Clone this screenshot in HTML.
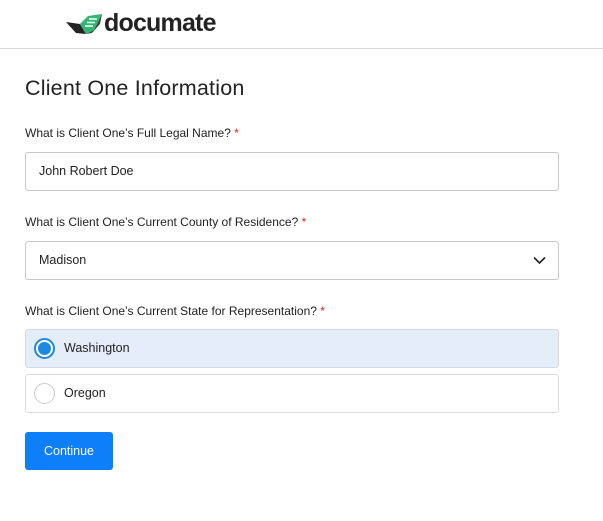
<!DOCTYPE html>
<html><head><style>
*{box-sizing:border-box;margin:0;padding:0}
body{width:603px;height:521px;background:#fff;font-family:"Liberation Sans",sans-serif;color:#1d1d1f;position:relative;overflow:hidden}
.hdr{position:absolute;left:0;top:0;width:603px;height:49px;border-bottom:1px solid #d4d4d4}
.logo{position:absolute;left:104px;top:9px;font-size:25px;font-weight:bold;color:#222;letter-spacing:-0.8px}
h1{position:absolute;left:25px;top:76px;font-size:21.5px;font-weight:normal;color:#222;letter-spacing:0.2px}
.lbl{position:absolute;left:25px;font-size:12px;color:#222}
.lbl b{color:#e02020;font-weight:normal}
.box{position:absolute;left:25px;width:534px;height:39px;border:1px solid #c9c9c9;border-radius:3px;font-size:12.5px;padding-left:13px;line-height:37px;color:#222}
.sel{background:#e5edf8;border-color:#d3d9e2}
.rad{padding-left:38px}
.circ{position:absolute;left:8px;top:8px;width:21px;height:21px;border-radius:50%;border:1px solid #ccc;background:#fff}
.on{border:2px solid #1b8be0;background:#fff}
.on::after{content:"";position:absolute;left:2px;top:2px;width:13px;height:13px;border-radius:50%;background:#1b8be0}
.btn{position:absolute;left:25px;top:432px;width:88px;height:38px;background:#0d7ff8;border-radius:3px;color:#fff;font-size:12.5px;text-align:center;line-height:38px}
</style></head><body>
<div class="hdr">
<svg style="position:absolute;left:64px;top:12px" width="42" height="24" viewBox="0 0 42 24">
<path d="M2 10 L16 12 L22 22 L12 21 Z" fill="#222"/>
<path d="M16 12 L24 4 L38 2 L30 18 L22 22 Z" fill="#2eb872"/>
<path d="M22 22 L30 18 L38 2 L36 12 L28 21 Z" fill="#222" opacity="0.85"/>
<path d="M25 7h8M23 10.5h8M21 14h8" stroke="#fff" stroke-width="1.5"/>
</svg>
<div class="logo">documate</div>
</div>
<h1>Client One Information</h1>
<div class="lbl" style="top:126px">What is Client One’s Full Legal Name? <b>*</b></div>
<div class="box" style="top:152px">John Robert Doe</div>
<div class="lbl" style="top:215px">What is Client One’s Current County of Residence? <b>*</b></div>
<div class="box" style="top:241px">Madison
<svg style="position:absolute;right:12px;top:14px" width="13" height="9" viewBox="0 0 13 9"><path d="M1 1.5 L6.5 7 L12 1.5" fill="none" stroke="#222" stroke-width="1.6"/></svg></div>
<div class="lbl" style="top:304px">What is Client One’s Current State for Representation? <b>*</b></div>
<div class="box sel rad" style="top:329px"><span class="circ on"></span>Washington</div>
<div class="box rad" style="top:374px;border-color:#ddd"><span class="circ"></span>Oregon</div>
<div class="btn">Continue</div>
</body></html>
